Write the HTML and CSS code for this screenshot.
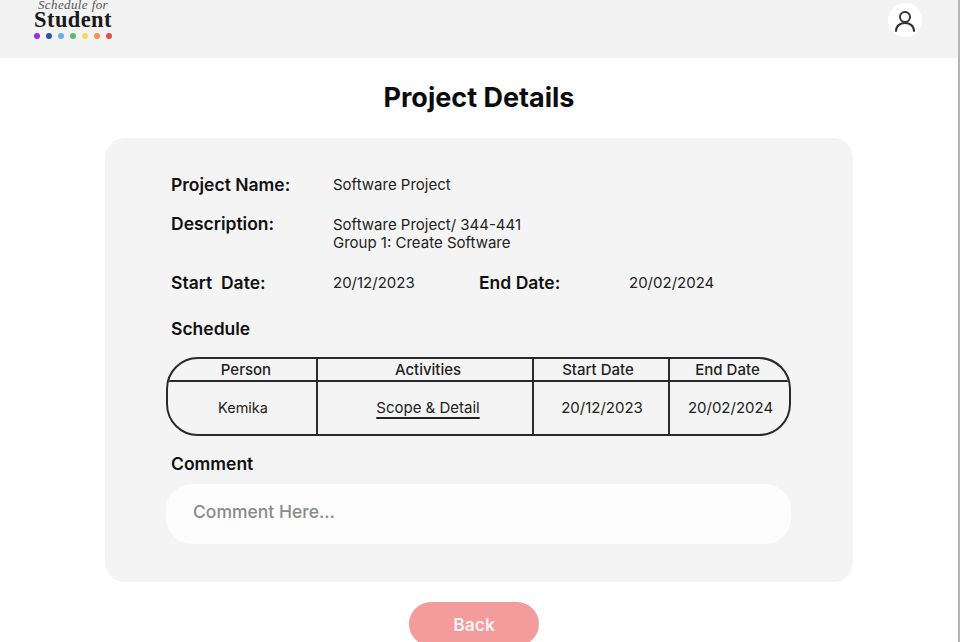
FILE: index.html
```html
<!DOCTYPE html>
<html lang="en">

<head>
    <meta charset="UTF-8">
    <meta name="viewport" content="width=device-width, initial-scale=1.0">
    <title>Project Details</title>
    <link rel="stylesheet" href="styles.css">
</head>

<body>
    <div id="page">
        <header id="topbar">
            <div class="logo">
                <div class="logo-small">Schedule for</div>
                <div class="logo-big">Student</div>
                <div class="logo-dots">
                    <span class="dot dot-purple"></span>
                    <span class="dot dot-navy"></span>
                    <span class="dot dot-sky"></span>
                    <span class="dot dot-green"></span>
                    <span class="dot dot-yellow"></span>
                    <span class="dot dot-orange"></span>
                    <span class="dot dot-red"></span>
                </div>
            </div>
            <div class="avatar">
                <svg width="22" height="24" viewBox="0 0 22 24" fill="none" stroke="#333" stroke-width="2">
                    <circle cx="11" cy="9" r="5"></circle>
                    <path d="M2 23c0-5 4-8 9-8s9 3 9 8" stroke-linecap="round"></path>
                </svg>
            </div>
        </header>

        <h1>Project Details</h1>

        <main class="card">
            <div class="info-row row-name">
                <div class="label">Project Name:</div>
                <div class="value">Software Project</div>
            </div>
            <div class="info-row row-desc">
                <div class="label">Description:</div>
                <div class="value">Software Project/ 344-441<br>Group 1: Create Software</div>
            </div>
            <div class="info-row row-dates">
                <div class="label">Start&nbsp; Date:</div>
                <div class="value value-start">20/12/2023</div>
                <div class="label label-end">End Date:</div>
                <div class="value">20/02/2024</div>
            </div>

            <h2>Schedule</h2>
            <div class="schedule">
                <div class="cell head head-person">Person</div>
                <div class="cell head head-activity">Activities</div>
                <div class="cell head head-date">Start Date</div>
                <div class="cell head head-date">End Date</div>
                <div class="cell cell-person">Kemika</div>
                <div class="cell cell-activity"><span class="activity-link">Scope &amp; Detail</span></div>
                <div class="cell cell-start">20/12/2023</div>
                <div class="cell">20/02/2024</div>
            </div>

            <h2 class="comment-title">Comment</h2>
            <div class="comment-box">Comment Here...</div>
        </main>

        <div class="actions">
            <button class="back-btn">Back</button>
        </div>
    </div>
</body>

</html>
```

FILE: styles.css
```css
body {
    margin: 0;
    background-color: #fff;
    font-family: Inter, "Liberation Sans", sans-serif;
    color: #111;
}

#page {
    width: 958px;
    height: 642px;
    border-right: 2px solid #b5b5b5;
    overflow: hidden;
}

#topbar {
    height: 58px;
    background-color: #f2f2f2;
    display: flex;
    justify-content: space-between;
    align-items: flex-start;
    padding: 0 36px 0 34px;
    overflow: hidden;
}

.logo {
    width: 78px;
    text-align: center;
    font-family: "Liberation Serif", serif;
    color: #1a1a1a;
}

.logo-small {
    font-size: 13px;
    line-height: 9px;
    font-style: italic;
    letter-spacing: 0.4px;
    color: #555;
}

.logo-big {
    font-size: 22.500px;
    line-height: 21px;
    font-weight: 700;
    letter-spacing: 0.4px;
}

.logo-dots {
    display: flex;
    justify-content: space-between;
    margin-top: 3px;
}

.dot {
    width: 6px;
    height: 6px;
    border-radius: 50%;
}

.dot-purple { background-color: #9b30d9; }
.dot-navy { background-color: #2a52a8; }
.dot-sky { background-color: #62b0f0; }
.dot-green { background-color: #55bb6e; }
.dot-yellow { background-color: #f7d95f; }
.dot-orange { background-color: #ee9550; }
.dot-red { background-color: #e84e45; }

.avatar {
    width: 34px;
    height: 34px;
    margin-top: 3px;
    border-radius: 50%;
    background-color: #fff;
    display: flex;
    align-items: center;
    justify-content: center;
}

h1 {
    margin: 21px 0 22px;
    font-size: 27px;
    line-height: 37px;
    font-weight: 700;
    text-align: center;
    color: #0c0c0c;
}

.card {
    width: 626px;
    height: 444px;
    margin-left: 105px;
    padding: 0 61px;
    background-color: #f4f4f4;
    border-radius: 20px;
}

.info-row {
    display: flex;
    padding-left: 5px;
}

.row-name {
    padding-top: 37px;
    align-items: center;
}

.row-desc {
    margin-top: 19px;
}

.row-dates {
    margin-top: 21px;
    align-items: center;
}

.label {
    width: 162px;
    flex-shrink: 0;
    font-size: 17.500px;
    line-height: 20px;
    font-weight: 600;
}

.value {
    font-size: 15px;
    line-height: 18px;
    color: #222;
}

.row-desc .value {
    padding-top: 2px;
}

.value-start {
    width: 146px;
}

.label-end {
    width: 150px;
}

h2 {
    margin: 26px 0 0 5px;
    font-size: 17.500px;
    line-height: 20px;
    font-weight: 600;
}

.schedule {
    display: grid;
    grid-template-columns: 150px 216px 136px 121px;
    grid-template-rows: 23px 54px;
    width: 625px;
    height: 79px;
    margin-top: 18px;
    box-sizing: border-box;
    border: 2px solid #2a2a2a;
    border-radius: 32px;
    overflow: hidden;
}

.cell {
    display: flex;
    align-items: center;
    justify-content: center;
    padding-bottom: 3px;
    font-size: 15px;
    color: #222;
    border-right: 2px solid #2a2a2a;
}

.cell:nth-child(4n) {
    border-right: none;
}

.head {
    padding-bottom: 1px;
    font-weight: 500;
    border-bottom: 2px solid #2a2a2a;
}

.head-person {
    padding-left: 8px;
}

.cell-person {
    padding-left: 2px;
    font-size: 14.500px;
}

.head-activity, .cell-activity {
    padding-left: 6px;
}

.cell-start {
    padding-left: 2px;
}

.head-date {
    padding-right: 6px;
}

.activity-link {
    text-decoration: underline;
    text-decoration-thickness: 1.500px;
    text-underline-offset: 4px;
}

.comment-title {
    margin-top: 18px;
}

.comment-box {
    width: 625px;
    height: 60px;
    margin-top: 10px;
    padding: 0 0 5px 27px;
    box-sizing: border-box;
    display: flex;
    align-items: center;
    background-color: #fdfdfd;
    border-radius: 26px;
    font-size: 17.500px;
    font-weight: 500;
    color: #8a8a8a;
}

.actions {
    display: flex;
    justify-content: center;
    padding: 20px 10px 0 0;
}

.back-btn {
    width: 130px;
    height: 44px;
    border: none;
    border-radius: 22px;
    background-color: #f29c9c;
    color: #fff3f3;
    font-family: inherit;
    font-size: 17.500px;
    font-weight: 600;
}
```
